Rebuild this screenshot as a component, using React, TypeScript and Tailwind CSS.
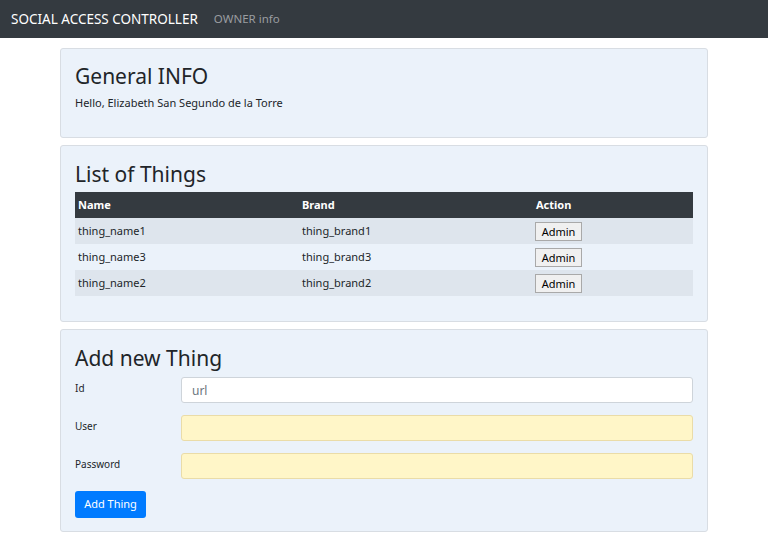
const things = [
  { name: "thing_name1", brand: "thing_brand1" },
  { name: "thing_name3", brand: "thing_brand3" },
  { name: "thing_name2", brand: "thing_brand2" },
];

const Card = ({ children, className }: { children: React.ReactNode; className?: string }) => (
  <div className={"rounded-[3px] border border-[#d8dde3] bg-[#ebf2fa] px-[14px] " + (className ?? "")}>
    {children}
  </div>
);

const App = () => {
  return (
    <div className="min-h-screen bg-white text-[#212529]" style={{ fontFamily: '"Noto Sans", "Open Sans", sans-serif' }}>
      <nav className="flex h-[38px] items-center bg-[#343a40] px-[11px]">
        <span className="text-[13.5px] text-white">SOCIAL ACCESS CONTROLLER</span>
        <span className="ml-[16px] text-[11.5px] text-[#9a9da1]">OWNER info</span>
      </nav>

      <div className="mx-auto mt-[10px] flex w-[648px] flex-col gap-[7px]">
        <Card className="h-[90px] pt-[12px]">
          <h1 className="text-[21px] leading-[30px]">General INFO</h1>
          <p className="mt-[4px] text-[11px] leading-[16px]">Hello, Elizabeth San Segundo de la Torre</p>
        </Card>

        <Card className="pt-[13px] pb-[25px]">
          <h2 className="text-[21px] leading-[30px]">List of Things</h2>
          <table className="mt-[3px] w-full table-fixed border-collapse text-[11px]">
            <thead>
              <tr className="h-[26px] bg-[#343a40] text-left text-white">
                <th className="w-[224px] px-[3px] font-bold">Name</th>
                <th className="w-[234px] px-[3px] font-bold">Brand</th>
                <th className="px-[3px] font-bold">Action</th>
              </tr>
            </thead>
            <tbody>
              {things.map((t, i) => (
                <tr key={t.name} className={"h-[26px] " + (i % 2 === 0 ? "bg-[#dee5ed]" : "")}>
                  <td className="px-[3px]">{t.name}</td>
                  <td className="px-[3px]">{t.brand}</td>
                  <td className="px-[2px]">
                    <button className="h-[19px] w-[47px] border border-[#a9a9a9] bg-[#f0f0f0] text-[11px] leading-none text-black">
                      Admin
                    </button>
                  </td>
                </tr>
              ))}
            </tbody>
          </table>
        </Card>

        <Card className="pt-[13px] pb-[13px]">
          <h2 className="text-[21px] leading-[30px]">Add new Thing</h2>
          <div className="mt-[4px] flex flex-col gap-[12px]">
            <div className="flex items-center">
              <label className="w-[106px] pb-[3px] text-[10px]">Id</label>
              <input
                className="h-[26px] flex-1 rounded-[3px] border border-[#ced4da] bg-white px-[10px] text-[12px] text-[#6c757d] outline-none"
                defaultValue="url"
              />
            </div>
            <div className="flex items-center">
              <label className="w-[106px] pb-[3px] text-[10px]">User</label>
              <input className="h-[26px] flex-1 rounded-[3px] border border-[#eadca8] bg-[#fff6c8] px-[10px] text-[12px] outline-none" />
            </div>
            <div className="flex items-center">
              <label className="w-[106px] pb-[3px] text-[10px]">Password</label>
              <input
                type="password"
                className="h-[26px] flex-1 rounded-[3px] border border-[#eadca8] bg-[#fff6c8] px-[10px] text-[12px] outline-none"
              />
            </div>
          </div>
          <button className="mt-[12px] h-[27px] w-[71px] rounded-[3px] bg-[#007bff] text-[11px] text-white">
            Add Thing
          </button>
        </Card>
      </div>
    </div>
  );
};

export default App;
